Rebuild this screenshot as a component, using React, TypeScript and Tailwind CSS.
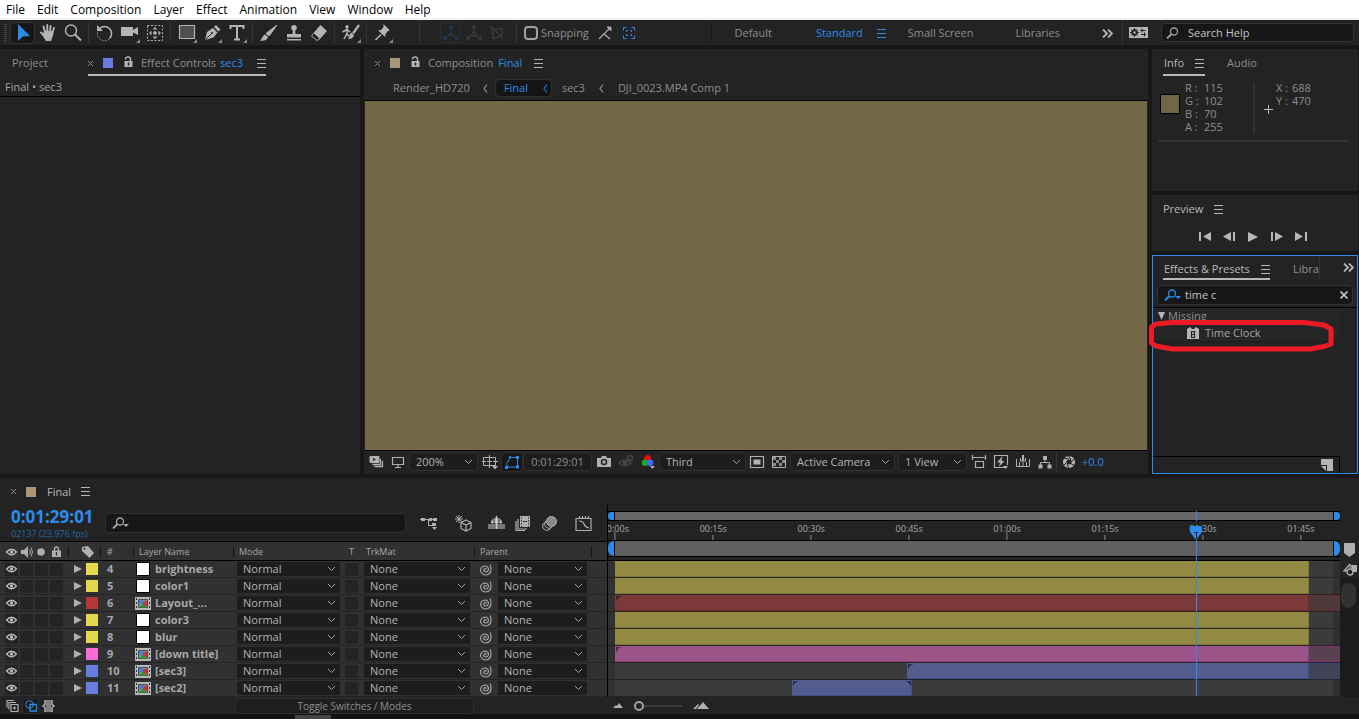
import type { ReactNode } from 'react';
import clsx from 'clsx';

const MENU = ['File', 'Edit', 'Composition', 'Layer', 'Effect', 'Animation', 'View', 'Window', 'Help'];

interface Layer {
  id: number;
  name: string;
  kind: 'solid' | 'comp';
  swatch: string;
  bar: string;
  ghost?: string;
  start: number;
  end: number;
  audio?: boolean;
}

const YELLOW = 'bg-[#928943] border-[#7d7436]';
const BLUE = 'bg-[#535c8e] border-[#404d88]';

const LAYERS: Layer[] = [
  { id: 4, name: 'brightness', kind: 'solid', swatch: 'bg-[#e4d84c]', bar: YELLOW, start: 0, end: 106.2 },
  { id: 5, name: 'color1', kind: 'solid', swatch: 'bg-[#e4d84c]', bar: YELLOW, start: 0, end: 106.2 },
  {
    id: 6,
    name: 'Layout_...',
    kind: 'comp',
    swatch: 'bg-[#b53838]',
    bar: 'bg-[#7b3939] border-[#6e2c2f]',
    ghost: 'bg-[#4f3839] border-[#642f33]',
    start: 0,
    end: 106.2,
  },
  { id: 7, name: 'color3', kind: 'solid', swatch: 'bg-[#e4d84c]', bar: YELLOW, start: 0, end: 106.2 },
  { id: 8, name: 'blur', kind: 'solid', swatch: 'bg-[#e4d84c]', bar: YELLOW, start: 0, end: 106.2 },
  {
    id: 9,
    name: '[down title]',
    kind: 'comp',
    swatch: 'bg-[#f76cd7]',
    bar: 'bg-[#9a5487] border-[#8a3f76]',
    ghost: 'bg-[#5a4152] border-[#80336b]',
    start: 0,
    end: 106.2,
  },
  {
    id: 10,
    name: '[sec3]',
    kind: 'comp',
    swatch: 'bg-[#677de0]',
    bar: BLUE,
    ghost: 'bg-[#414457] border-[#35437a]',
    start: 44.7,
    end: 106.2,
    audio: true,
  },
  { id: 11, name: '[sec2]', kind: 'comp', swatch: 'bg-[#677de0]', bar: BLUE, start: 27.1, end: 45.4, audio: true },
];

const TICKS = [
  { at: 0, label: '00:00s' },
  { at: 15, label: '00:15s' },
  { at: 30, label: '00:30s' },
  { at: 45, label: '00:45s' },
  { at: 60, label: '01:00s' },
  { at: 75, label: '01:15s' },
  { at: 90, label: '01:30s' },
  { at: 105, label: '01:45s' },
];

const PLAYHEAD = 89;

// seconds -> percentage of the track width
const span = (seconds: number) => seconds * 0.892;
const pos = (seconds: number) => `${1 + span(seconds)}%`;

interface IconProps {
  w?: number;
  h?: number;
  className?: string;
  children: ReactNode;
}

const Icon = ({ w = 20, h = 20, className, children }: IconProps) => (
  <svg
    width={w}
    height={h}
    viewBox={`0 0 ${w} ${h}`}
    fill="none"
    stroke="currentColor"
    className={clsx('shrink-0', className)}
    aria-hidden="true"
  >
    {children}
  </svg>
);

const Hamburger = ({ className }: { className?: string }) => (
  <Icon w={9} h={9} className={className}>
    <path d="M0 .5h9M0 4.500h9M0 8.500h9" />
  </Icon>
);

const Chevron = () => (
  <Icon w={9} h={6} className="pointer-events-none absolute right-1 top-1/2 -translate-y-1/2 text-[#a0a0a0]">
    <path d="M1 1l3.500 3.500L8 1" />
  </Icon>
);

const DoubleChevron = () => (
  <Icon w={11} h={9} className="text-[#b4b4b4]">
    <path d="M1 .5l4 4-4 4M6 .5l4 4-4 4" strokeWidth="1.800" />
  </Icon>
);

const Unlock = () => (
  <Icon w={9} h={11} className="text-[#b4b4b4]">
    <path d="M1.500 3.500V3q0-2 2.500-2t2.500 2v2" strokeWidth="1.400" />
    <path fill="currentColor" stroke="none" d="M.5 5h8v6h-8z" />
    <path d="M4.500 6.500v3" stroke="#232323" strokeWidth="1.500" />
  </Icon>
);

const CloseMark = () => (
  <Icon w={5} h={5} className="text-[#8a8a8a]">
    <path d="M0 0l5 5M5 0L0 5" />
  </Icon>
);

const Eye = () => (
  <Icon w={11} h={8} className="text-[#b8b8b8]">
    <path d="M.5 4Q5.500-1.500 10.500 4 5.500 9.500.5 4z" strokeWidth="1.400" />
    <circle cx="5.500" cy="4" r="1.700" fill="currentColor" stroke="none" />
  </Icon>
);

const Corner = () => <path d="M20 16v4h-4z" fill="#8a8a8a" stroke="none" />;

const Magnifier = ({ arrow }: { arrow?: boolean }) => (
  <Icon w={18} h={12}>
    <circle cx="8" cy="4.500" r="3.500" strokeWidth="1.300" />
    <path d="M5.500 7L1 11.500" strokeWidth="1.800" />
    {arrow && <path d="M11 7h6l-3 3z" fill="currentColor" stroke="none" />}
  </Icon>
);

const ToolDivider = () => <span className="mx-[3px] h-[21px] w-px shrink-0 bg-[#343434]" />;

interface ToolProps {
  label: string;
  active?: boolean;
  children: ReactNode;
}

const Tool = ({ label, active, children }: ToolProps) => (
  <button
    type="button"
    aria-label={label}
    className={clsx(
      'flex h-[22px] w-[25px] shrink-0 items-center justify-center',
      active ? 'rounded-sm border border-[#333333] bg-[#171717] text-[#2d8ceb]' : 'text-[#b4b4b4]',
    )}
  >
    <Icon>{children}</Icon>
  </button>
);

const Toolbar = () => (
  <div className="flex h-[25px] shrink-0 items-center bg-[#232323] text-[#8e8e8e]">
    <Icon w={10} h={20} className="text-[#444444]">
      <path d="M5.500 1v19" strokeWidth="3" strokeDasharray="1 1" />
    </Icon>
    <Tool label="Selection" active>
      <path d="M5 1v17l4.500-4.500 7.500-.5z" fill="currentColor" stroke="none" />
    </Tool>
    <Tool label="Hand">
      <path d="M7 9L5.500 3.500M9.300 9V2M12 9l.6-6M14.300 10l1.700-5M6.500 13L3 9.500" strokeWidth="1.900" strokeLinecap="round" />
      <path d="M6 8h9l.5 3-2.500 7H8l-3.500-5.500z" fill="currentColor" stroke="none" />
    </Tool>
    <Tool label="Zoom">
      <circle cx="8" cy="7.500" r="5.500" strokeWidth="1.400" />
      <path d="M12 11.500l6 6" strokeWidth="2" />
    </Tool>
    <ToolDivider />
    <Tool label="Rotate">
      <path d="M4.500 5.500a7 7 0 1 1 10 10" strokeWidth="1.500" />
      <path d="M14 16A7 7 0 0 1 3 8" strokeDasharray="1.500 1.500" />
      <path d="M2 2v6h6z" fill="currentColor" stroke="none" />
    </Tool>
    <Tool label="Camera">
      <path d="M1 4h12v3l5-3v8l-5-2.500V13H1z" fill="currentColor" stroke="none" />
      <Corner />
    </Tool>
    <Tool label="Pan Behind">
      <path d="M2.500 2.500h15v15h-15z" strokeDasharray="2 1.600" />
      <circle cx="10" cy="10" r="1.400" fill="currentColor" />
      <path
        d="M10 4l2.500 2.500h-5zM10 16l2.500-2.500h-5zM4 10l2.500-2.500v5zM16 10l-2.500-2.500v5z"
        fill="currentColor"
        stroke="none"
      />
    </Tool>
    <ToolDivider />
    <Tool label="Rectangle">
      <path d="M2.500 2.500h15v13h-15z" fill="#505050" strokeWidth="1.200" />
      <Corner />
    </Tool>
    <Tool label="Pen">
      <path d="M3 17l2-8 6-4 4.500 4.500-4 5zM12 4l2-2 4.500 4.500-2 2z" fill="currentColor" stroke="none" />
      <path d="M3.500 16.500l6-6" stroke="#232323" />
      <circle cx="10" cy="10" r="1" fill="#232323" stroke="none" />
      <Corner />
    </Tool>
    <Tool label="Type">
      <path d="M3.500 6V3h13v3M10 3v13M7 16.500h6" strokeWidth="2" />
      <Corner />
    </Tool>
    <ToolDivider />
    <Tool label="Brush">
      <path d="M18 2l-8 11-3-2.500z" fill="currentColor" />
      <path d="M6 11.500l3 2.500c-1 4-5 4-8 3.500 2-1 2.500-5 5-6z" fill="currentColor" stroke="none" />
    </Tool>
    <Tool label="Clone Stamp">
      <circle cx="10" cy="4.800" r="2.800" fill="currentColor" stroke="none" />
      <path d="M9 6h2l.5 5H17v3.500H3V11h5.500zM3 16h14v1.500H3z" fill="currentColor" stroke="none" />
    </Tool>
    <Tool label="Eraser">
      <path d="M11.500 2L18 8l-7 8-6.500-6z" fill="currentColor" stroke="none" />
      <path d="M4.500 10.500L2.500 13l5.500 4.500 3-2" />
    </Tool>
    <ToolDivider />
    <Tool label="Roto Brush">
      <circle cx="6" cy="3.800" r="1.700" fill="currentColor" stroke="none" />
      <path d="M6 5v6M1.500 9L6 6.500 9 9M6 10.500L3 16M6 10.500l2 3" strokeWidth="1.500" />
      <path d="M18 2l-6 8.500" strokeWidth="2.200" />
      <path d="M10 9.500l3 2.500c-1 4-4 4-6 4 2-2 1-4 3-6.500z" fill="currentColor" stroke="none" />
      <Corner />
    </Tool>
    <ToolDivider />
    <Tool label="Puppet Pin">
      <path d="M10.500 1L17 7.500l-2 .5-2.500 3-.2 3L5 7.500l3-.5L10.500 4z" fill="currentColor" stroke="none" />
      <path d="M8 11.500L2.500 17" strokeWidth="1.600" />
      <Corner />
    </Tool>
    <span className="ml-6 mr-5 h-[25px] w-px bg-[#343434]" />
    <span className="flex h-[21px] w-[21px] items-center justify-center rounded-sm border border-[#2b2f33] text-[#234466]">
      <Icon w={16} h={16}>
        <path d="M8 9V1M8 9l-7 5M8 9l7 5M6 3l2-2 2 2M1 11v3h3M15 11v3h-3" />
      </Icon>
    </span>
    <Icon w={16} h={16} className="ml-[5px] text-[#454545]">
      <circle cx="8" cy="9" r="2" />
      <path d="M8 7V1M6 10l-5 4M10 10l5 4M6 3l2-2 2 2M1 11v3h3M15 11v3h-3" />
    </Icon>
    <Icon w={16} h={16} className="ml-[7px] text-[#454545]">
      <path d="M2 1v3h3M2 1l12 13M4 5v9l9-4V3L6 5" />
    </Icon>
    <span className="ml-[11px] mr-[7px] h-[21px] w-px bg-[#343434]" />
    <label className="flex items-center gap-[3px] text-[11px]">
      <input type="checkbox" className="size-[14px] appearance-none rounded-sm border-2 border-[#a0a0a0]" />
      Snapping
    </label>
    <Icon w={14} h={14} className="ml-[9px] text-[#a8a8a8]">
      <path d="M1 13l5-5 6 5M6 8l5-5" strokeWidth="1.300" />
      <path d="M9 1h4v4z" fill="currentColor" />
    </Icon>
    <Icon w={14} h={14} className="ml-[10px] text-[#2d8ceb]">
      <path d="M1.500 4.500v-3h3M9.500 1.500h3v3M12.500 9.500v3h-3M4.500 12.500h-3v-3M4.500 6V4.500H6M8 4.500h1.500V6M9.500 8v1.500H8M6 9.500H4.500V8" />
    </Icon>

    <nav className="ml-auto flex items-center pt-px text-[11px]">
      <span className="h-[21px] w-px bg-[#1a1a1a]" />
      <button type="button" className="ml-[22px]">Default</button>
      <button type="button" className="ml-11 text-[#2d8ceb]">Standard</button>
      <Hamburger className="ml-[14px] text-[#2d8ceb]" />
      <button type="button" className="ml-[22px]">Small Screen</button>
      <button type="button" className="ml-[42px] mr-[42px]">Libraries</button>
      <DoubleChevron />
    </nav>
    <span className="ml-[9px] h-[25px] w-px bg-[#343434]" />
    <Icon w={19} h={11} className="ml-[6px]">
      <path d="M0 0h19v11H0z" fill="#b4b4b4" stroke="none" />
      <circle cx="5.500" cy="5.500" r="2.500" stroke="#232323" strokeWidth="1.600" />
      <path d="M5.500 1v9M1 5.500h9M2.500 2.500l6 6M8.500 2.500l-6 6" stroke="#232323" />
      <circle cx="5.500" cy="5.500" r="1.200" fill="#b4b4b4" stroke="none" />
      <path d="M11.500 3.500h5M13 1.500v4M12 7.500h5M15.500 5.500v4" stroke="#232323" />
    </Icon>
    <div className="ml-[13px] mr-[5px] flex h-[19px] w-[193px] items-center rounded-sm border border-[#333333] bg-[#171717] pl-1 text-[#a0a0a0]">
      <Magnifier />
      <input
        type="text"
        aria-label="Search Help"
        placeholder="Search Help"
        className="ml-1 min-w-0 flex-1 bg-transparent text-[11px] text-[#c4c4c4] outline-none placeholder:text-[#c4c4c4]"
      />
    </div>
  </div>
);

const EffectControls = () => (
  <section className="w-[360px] shrink-0 bg-[#232323] text-[#8e8e8e]">
    <div className="flex h-[27px] items-end pl-3">
      <button type="button" className="w-[76px] pb-[5px] text-left leading-4">Project</button>
      <div className="flex h-[26px] items-center border-b-2 border-[#b8b8b8] pt-0.5 leading-4">
        <CloseMark />
        <span className="ml-[10px] size-[10px] bg-[#677de0]" />
        <span className="ml-[11px] mr-[8px] pb-1">
          <Unlock />
        </span>
        Effect Controls <span className="ml-1 text-[#2d8ceb]">sec3</span>
        <Hamburger className="ml-[14px] text-[#b4b4b4]" />
      </div>
    </div>
    <div className="h-[21px] border-b border-black pl-[5px] leading-[22px] text-[#a4a4a4]">Final • sec3</div>
  </section>
);

const Crumb = ({ className }: { className?: string }) => (
  <Icon w={5} h={9} className={className}>
    <path d="M4 .5l-3 4 3 4" strokeWidth="1.200" />
  </Icon>
);

interface DropdownProps {
  label: string;
  value: string;
  className?: string;
}

const Dropdown = ({ label, value, className }: DropdownProps) => (
  <span className={clsx('relative inline-block shrink-0 bg-[#1d1d1d]', className)}>
    <select aria-label={label} className="block h-full w-full appearance-none bg-transparent pl-[6px] text-[11px] leading-3 text-[#b4b4b4] outline-none">
      <option>{value}</option>
    </select>
    <Chevron />
  </span>
);

const Cell = ({ children, active }: { children: ReactNode; active?: boolean }) => (
  <span
    className={clsx(
      'flex h-5 w-[22px] shrink-0 items-center justify-center',
      active ? 'rounded-sm border border-[#2e2e2e] bg-[#171717] text-[#2d8ceb]' : 'text-[#b0b0b0]',
    )}
  >
    <Icon w={16} h={16}>{children}</Icon>
  </span>
);

const Viewer = () => (
  <section className="flex min-w-0 flex-1 flex-col bg-[#232323] text-[#8e8e8e]">
    <div className="flex h-7 shrink-0 items-center pl-[11px]">
      <CloseMark />
      <span className="ml-[10px] size-[10px] bg-[#a99778]" />
      <span className="ml-[11px] mr-[8px] pb-1">
        <Unlock />
      </span>
      Composition <span className="ml-[5px] text-[#2d8ceb]">Final</span>
      <Hamburger className="ml-3 text-[#b4b4b4]" />
    </div>
    <div className="flex h-[23px] shrink-0 items-center pb-px pl-[29px]">
      <button type="button">Render_HD720</button>
      <Crumb className="ml-[13px] mr-[7px]" />
      <button type="button" className="flex h-[18px] w-[57px] items-center justify-between rounded-sm border border-[#303030] bg-[#151515] pl-2 pr-[3px] text-[#2d8ceb]">
        Final
        <Crumb className="text-[#2474c2]" />
      </button>
      <button type="button" className="ml-[10px]">sec3</button>
      <Crumb className="mx-[14px]" />
      <button type="button">DJI_0023.MP4 Comp 1</button>
    </div>
    <div className="ml-px mr-px min-h-0 flex-1 border-y border-black bg-[#736746]" />
    <div className="flex h-[23px] shrink-0 items-center pb-[2px] pl-px">
      <Cell>
        <path d="M2 2.500h9v6H2z" fill="currentColor" />
        <path d="M5 4l3 1.500L5 7z" fill="#232323" stroke="none" />
        <path d="M12.500 5v5.500H4.500M14.500 7v5.500H6.500" strokeWidth="1.300" />
      </Cell>
      <Cell>
        <path d="M2.500 3.500h11v7h-11zM8 10v3M5 13.500h6" strokeWidth="1.200" />
      </Cell>
      <Dropdown label="Magnification" value="200%" className="mr-px h-[19px] w-[69px] rounded-sm border border-[#303030]" />
      <Cell>
        <path d="M1.500 3.500h12v8h-12zM7.500 1v13M0 7.500h4M11 7.500h5M5 7.500h5" />
        <path d="M10 12h6l-3 3.500z" fill="currentColor" stroke="none" />
      </Cell>
      <Cell active>
        <path d="M3.500 13L2.500 9.500l4-6H13.500v9.500z" />
        <path d="M1 12h3v3H1zM12 2h3v3h-3zM12 11.500h3v3h-3zM5 2h2v2H5z" fill="currentColor" stroke="none" />
      </Cell>
      <button type="button" className="mr-px h-[19px] w-[69px] rounded-sm border border-[#303030] bg-[#1d1d1d] text-[11px]">0:01:29:01</button>
      <Cell>
        <path d="M1 4h4l1-2h4l1 2h4v9H1z" fill="currentColor" stroke="none" />
        <circle cx="8" cy="8" r="2.500" stroke="#232323" strokeWidth="1.500" />
      </Cell>
      <span className="flex h-5 w-[22px] items-center justify-center text-[#454545]">
        <Icon w={16} h={16}>
          <path d="M1 9q6-6 12 0-6 6-12 0z" strokeWidth="1.500" />
          <circle cx="7" cy="9" r="2" fill="currentColor" />
          <circle cx="12" cy="4" r="2.500" strokeWidth="1.500" />
        </Icon>
      </span>
      <Cell>
        <circle cx="7.500" cy="4.500" r="3.500" fill="#f00808" stroke="none" />
        <circle cx="5" cy="8.700" r="3.300" fill="#10b010" stroke="none" />
        <circle cx="10" cy="8.700" r="3.300" fill="#4a68ff" stroke="none" />
        <path d="M10 12h5l-2.500 3z" fill="currentColor" stroke="none" />
      </Cell>
      <Dropdown label="Resolution" value="Third" className="h-[19px] w-[87px] rounded-sm border border-[#303030]" />
      <Cell>
        <path d="M1.500 2.500h13v11h-13z" strokeWidth="1.200" />
        <path d="M4.500 5.500h7v5h-7z" fill="currentColor" stroke="none" />
      </Cell>
      <Cell>
        <path d="M1.500 2.500h13v11h-13z" />
        <path
          d="M2 3h3v3H2zM8 3h3v3H8zM5 6h3v3H5zM11 6h3v3h-3zM2 9h3v3H2zM8 9h3v3H8z"
          fill="#8a8a8a"
          stroke="none"
        />
      </Cell>
      <Dropdown label="3D view" value="Active Camera" className="mr-[3px] h-[19px] w-[105px] rounded-sm border border-[#303030]" />
      <Dropdown label="View layout" value="1 View" className="mr-px h-[19px] w-[69px] rounded-sm border border-[#303030]" />
      <Cell>
        <path d="M1 3.500h14M1.500 1v5M14.500 1v5M4.500 7.500h8v6h-8z" strokeWidth="1.200" />
      </Cell>
      <Cell>
        <path d="M12 13.500H1.500v-12h13V11" strokeWidth="1.200" />
        <path d="M9.500 2L4 8.500h3L6 13l5.500-6h-3zM10 12h5l-2.500 3z" fill="currentColor" stroke="none" />
      </Cell>
      <Cell>
        <path d="M1.500 5v7.500h13V5M4.500 8v4M8 8v4M11.500 8v4M5.500 4v3h5V4" />
        <path d="M7 1h2v6H7z" fill="currentColor" stroke="none" />
      </Cell>
      <Cell>
        <path d="M6 2h4v4H6zM1.500 10.500h4v4h-4zM10.500 10.500h4v4h-4z" fill="currentColor" stroke="none" />
        <path d="M8 6v2.500M3.500 11V8.500h9V11" />
      </Cell>
      <span className="mr-px h-5 w-px bg-[#343434]" />
      <Cell>
        <circle cx="8" cy="8" r="4.300" strokeWidth="3.600" />
        <path d="M7 1l3 5M14 5l-5 3M14 12l-5-3M8 15l-2-5M2 12l4-4M2 4l6 1" stroke="#232323" />
      </Cell>
      <span className="ml-[2px] text-[#2d8ceb]">+0.0</span>
    </div>
  </section>
);

interface InfoRowProps {
  name: string;
  value: number;
  narrow?: boolean;
}

const InfoRow = ({ name, value, narrow }: InfoRowProps) => (
  <div className="flex h-[13px]">
    <dt className={narrow ? 'w-4' : 'w-[19px]'}>{name} :</dt>
    <dd>{value}</dd>
  </div>
);

const InfoPanel = () => (
  <section className="h-[142px] shrink-0 bg-[#232323] text-[#8e8e8e]">
    <div className="flex h-[27px] items-end pl-[11px]">
      <div className="flex h-[26px] w-[42px] items-center justify-between border-b-2 border-[#b8b8b8] px-px pt-0.5 leading-4 text-[#b8b8b8]">
        Info
        <Hamburger />
      </div>
      <button type="button" className="ml-[22px] pb-[5px] leading-4">Audio</button>
    </div>
    <div className="ml-[6px] mr-[9px] mt-2 flex h-[58px] border-b-2 border-[#323232] pl-[2px]">
      <span className="mt-[10px] size-5 border border-black bg-[#736646]" />
      <dl className="-mt-px ml-[5px] leading-[9px]">
        <InfoRow name="R" value={115} />
        <InfoRow name="G" value={102} />
        <InfoRow name="B" value={70} />
        <InfoRow name="A" value={255} />
      </dl>
      <span className="ml-[30px] h-[50px] w-0.5 bg-[#323232]" />
      <Icon w={9} h={9} className="ml-[9px] mt-[21px] text-[#b8b8b8]">
        <path d="M4.500 0v9M0 4.500h9" />
      </Icon>
      <dl className="-mt-px ml-[3px] leading-[9px]">
        <InfoRow name="X" value={688} narrow />
        <InfoRow name="Y" value={470} narrow />
      </dl>
    </div>
  </section>
);

const PreviewPanel = () => (
  <section className="h-14 shrink-0 bg-[#232323]">
    <div className="flex h-7 items-center gap-[11px] pl-[11px] text-[#b8b8b8]">
      Preview
      <Hamburger />
    </div>
    <div className="flex h-7 items-center justify-center gap-[12px] pr-1 text-[#b8b8b8]">
      <button type="button" aria-label="First frame">
        <Icon w={12} h={10}>
          <path d="M0 0h2v9H0zM12 0v9L4 4.500z" fill="currentColor" stroke="none" />
        </Icon>
      </button>
      <button type="button" aria-label="Previous frame">
        <Icon w={12} h={10}>
          <path d="M8 0v9L0 4.500zM10 0h2v9h-2z" fill="currentColor" stroke="none" />
        </Icon>
      </button>
      <button type="button" aria-label="Play">
        <Icon w={12} h={10}>
          <path d="M1 0v10l10-5z" fill="currentColor" stroke="none" />
        </Icon>
      </button>
      <button type="button" aria-label="Next frame">
        <Icon w={12} h={10}>
          <path d="M0 0h2v9H0zM4 0v9l8-4.500z" fill="currentColor" stroke="none" />
        </Icon>
      </button>
      <button type="button" aria-label="Last frame">
        <Icon w={12} h={10}>
          <path d="M0 0v9l8-4.500zM10 0h2v9h-2z" fill="currentColor" stroke="none" />
        </Icon>
      </button>
    </div>
  </section>
);

const EffectsPanel = () => (
  <section className="relative flex min-h-0 flex-1 flex-col border border-[#2d8ceb] bg-[#232323]">
    <div className="flex h-[24px] shrink-0 items-end pl-[10px] text-[#8e8e8e]">
      <div className="flex h-[24px] w-[107px] items-center justify-between border-b-2 border-[#b8b8b8] pl-px pt-1 text-[#b8b8b8]">
        Effects &amp; Presets
        <Hamburger />
      </div>
      <button type="button" className="ml-[23px] mr-auto h-[23px] border-r border-[#343434]">Libra</button>
      <span className="mb-2 mr-[3px]">
        <DoubleChevron />
      </span>
    </div>
    <div className="ml-1 mr-1 mt-[5px] flex h-[20px] shrink-0 items-center rounded-sm border border-[#333333] bg-[#171717] pl-[6px] pr-1 text-[#2d8ceb]">
      <Magnifier arrow />
      <input
        type="text"
        aria-label="Search effects"
        defaultValue="time c"
        className="ml-[3px] min-w-0 flex-1 bg-transparent text-[#c4c4c4] outline-none"
      />
      <button type="button" aria-label="Clear search" className="text-[#c4c4c4]">
        <Icon w={8} h={8}>
          <path d="M.5.5l7 7M7.500.5l-7 7" strokeWidth="1.600" />
        </Icon>
      </button>
    </div>
    <div className="mt-[2px] min-h-0 flex-1 border-t border-black pr-[17px] text-[#8e8e8e]">
      <div className="flex h-[17px] items-center gap-[3px] border-b border-[#1e1e1e] bg-[#262626] pl-[5px]">
        <Icon w={7} h={8} className="text-[#b4b4b4]">
          <path d="M0 0h7L3.500 8z" fill="currentColor" stroke="none" />
        </Icon>
        Missing
      </div>
      <div className="flex h-[17px] items-center gap-[6px] border-b border-[#1e1e1e] bg-[#262626] pl-[34px] text-[#a4a4a4]">
        <Icon w={12} h={12}>
          <path d="M0 2l3-2 2 2h2l2-2 3 2v10H0z" fill="#b4b4b4" stroke="none" />
          <path d="M4.500 4.500h3v6h-3zM4.500 7.500h3" stroke="#232323" strokeWidth="1.200" />
        </Icon>
        Time Clock
      </div>
    </div>
    <div className="mr-[17px] flex h-[17px] shrink-0 items-center justify-end border-r border-t border-black pr-[6px]">
      <Icon w={12} h={12}>
        <path d="M0 0h12v12H6V6H0z" fill="#b4b4b4" stroke="none" />
        <path d="M0 7h5v5z" fill="#b4b4b4" stroke="none" />
      </Icon>
    </div>
    {/* hand-drawn marker around the found effect */}
    <svg
      width="186"
      height="33"
      viewBox="0 0 186 33"
      fill="none"
      aria-hidden="true"
      className="pointer-events-none absolute -left-[5px] top-[63px]"
    >
      <path
        d="M24 3.500H156l20 2.500 7 4v15l-7 2.500-14 2.500H24L8 27l-4.500-3V8L8 5z"
        stroke="#ed1c24"
        strokeWidth="5"
        strokeLinejoin="round"
      />
    </svg>
  </section>
);

const CompIcon = () => (
  <Icon w={16} h={13}>
    <path d="M0 0h16v13H0z" fill="#b8b8b8" stroke="none" />
    <path d="M3.500 2.500h9v8h-9z" stroke="#4a4a4a" fill="#8a8a8a" />
    <path d="M1.500 1v12M14.500 1v12" stroke="#303030" strokeDasharray="2 2" />
    <path d="M8 4h4v5H8z" fill="#d83030" stroke="none" />
    <circle cx="6" cy="5" r="2.200" fill="#3088e8" stroke="none" />
    <path d="M4.500 10.500l3.500-4 3 4z" fill="#18a028" stroke="none" />
  </Icon>
);

const Pickwhip = () => (
  <Icon w={13} h={13} className="text-[#a4a4a4]">
    <path
      d="M7.500 6.500Q6 5 5 6.300 4 8.500 6.300 9 9.500 9 9.500 6 9 3 6 3 2 3.500 1.500 7 2 11.500 6.500 12 12 11.500 12 6q0-3-1-4.500"
      strokeWidth="1.200"
    />
  </Icon>
);

const Box = ({ on = true }: { on?: boolean }) => (
  <span className={clsx('mr-[2px] h-[13px] w-[13px]', on && 'bg-[#242424]')} />
);

const LayerRow = ({ layer }: { layer: Layer }) => (
  <li className="flex h-[17px] items-center border-b border-[#242424] bg-[#313131] pl-[5px]">
    <span className="mr-[2px] flex h-[13px] w-[13px] items-center justify-center bg-[#242424]">
      <Eye />
    </span>
    <Box on={layer.audio} />
    <Box />
    <Box />
    <Icon w={9} h={8} className="ml-2 mr-1 text-[#b0b0b0]">
      <path d="M1 0v8l8-4z" fill="currentColor" stroke="none" />
    </Icon>
    <span className={clsx('size-3', layer.swatch)} />
    <span className="ml-[9px] w-[28px] font-bold">{layer.id}</span>
    <span className="flex w-[20px]">
      {layer.kind === 'solid' ? (
        <span className="ml-px size-[14px] border border-black bg-white" />
      ) : (
        <CompIcon />
      )}
    </span>
    <span className="w-[82px] font-bold">{layer.name}</span>
    <Dropdown label={`${layer.name} mode`} value="Normal" className="h-[14px] w-[103px]" />
    <span className="ml-[5px] h-[13px] w-[13px] bg-[#242424]" />
    <Dropdown label={`${layer.name} track matte`} value="None" className="ml-[6px] h-[14px] w-[106px]" />
    <span className="ml-[9px] mr-[6px]">
      <Pickwhip />
    </span>
    <Dropdown label={`${layer.name} parent`} value="None" className="h-[14px] w-[89px]" />
  </li>
);

const HeadCell = ({ className, children }: { className: string; children: ReactNode }) => (
  <span className={clsx('flex h-3 shrink-0 items-center border-r border-[#151515]', className)}>{children}</span>
);

const LayerHeader = () => (
  <div className="flex h-5 items-center border-y border-black bg-[#313131] pt-px text-[9px] text-[#a8a8a8]">
    <HeadCell className="w-[69px] gap-[4px] pl-[6px] text-[#b0b0b0]">
      <Eye />
      <Icon w={12} h={12}>
        <path d="M0 4h3l4-4v12L3 8H0z" fill="currentColor" stroke="none" />
        <path d="M8.500 3.500q2 2.500 0 5M10 1.500q3 4.500 0 9" />
      </Icon>
      <Icon w={8} h={8}>
        <circle cx="4" cy="4" r="3.800" fill="currentColor" stroke="none" />
      </Icon>
      <Icon w={9} h={11} className="ml-[3px]">
        <path d="M2.500 5V3q0-2 2-2t2 2v2" strokeWidth="1.300" />
        <path d="M0 4.500h9V11H0z" fill="currentColor" stroke="none" />
        <path d="M4.500 6v3.500" stroke="#313131" strokeWidth="1.400" />
      </Icon>
    </HeadCell>
    <HeadCell className="w-8 pl-[13px]">
      <Icon w={12} h={12}>
        <path d="M0 1l6-1 6 7-4.500 5L0 5z" fill="#b0b0b0" stroke="none" />
        <circle cx="2.500" cy="2.800" r="1" fill="#313131" stroke="none" />
      </Icon>
    </HeadCell>
    <HeadCell className="w-[33px] pl-[6px]">#</HeadCell>
    <HeadCell className="w-[100px] pl-[5px]">Layer Name</HeadCell>
    <HeadCell className="w-[241px] pl-[5px]">
      <span className="w-[110px]">Mode</span>
      <span className="w-[17px]">T</span>
      TrkMat
    </HeadCell>
    <HeadCell className="w-[117px] pl-[5px]">Parent</HeadCell>
  </div>
);

const Track = ({ layer }: { layer: Layer }) => (
  <div className="flex h-[17px] border-b border-[#242424] bg-[#313131]">
    <span className="shrink-0" style={{ width: pos(0) }} />
    <div className="flex min-w-0 flex-1 bg-gradient-to-r from-[#3b3b3b] from-99% to-[#303030] to-99%">
      <span className="shrink-0" style={{ width: `${span(layer.start) / 0.99}%` }} />
      <span
        className={clsx('relative shrink-0 overflow-hidden border-b border-r', layer.bar)}
        style={{ width: `${span(layer.end - layer.start) / 0.99}%` }}
      >
        {layer.kind === 'comp' && (
          <Icon w={6} h={6} className="absolute left-px top-px text-black/50">
            <path d="M0 0h6Q1 1 0 6z" fill="currentColor" stroke="none" />
          </Icon>
        )}
        {layer.kind === 'comp' && !layer.ghost && (
          <Icon w={6} h={6} className="absolute right-0 top-px text-black/50">
            <path d="M6 0H0q5 1 6 6z" fill="currentColor" stroke="none" />
          </Icon>
        )}
      </span>
      {layer.ghost && <span className={clsx('flex-1 border-y', layer.ghost)} />}
    </div>
  </div>
);

// Blue-handled range bar, used for the navigator and for the work area
const RangeBar = ({ className, fill }: { className: string; fill: string }) => (
  <div className={clsx('flex border-y border-black', className)}>
    <span className="w-[6px] rounded-l-md bg-[#2d8ceb]" />
    <span className={clsx('flex-1 border-x border-black', fill)} />
    <span className="w-[6px] rounded-r-md bg-[#2d8ceb]" />
  </div>
);

const Timeline = () => (
  <section className="shrink-0 bg-[#232323]">
    <div className="flex h-[27px] items-center pl-[11px] text-[#b8b8b8]">
      <CloseMark />
      <span className="ml-[10px] mr-[11px] size-[10px] bg-[#a99778]" />
      Final
      <Hamburger className="ml-[10px]" />
    </div>

    <div className="flex">
      <div className="w-[608px] shrink-0 border-r border-black">
        <div className="flex h-9 items-center">
          <div className="w-[105px] pl-[11px] text-[#2d8ceb]">
            <div className="text-[17px] font-bold leading-[22px]">0:01:29:01</div>
            <div className="text-[9px] leading-3 text-[#1f66ad]">02137 (23.976 fps)</div>
          </div>
          <div className="flex h-5 w-[301px] items-center rounded-sm border border-[#303030] bg-[#171717] pl-1.5 text-[#a8a8a8]">
            <Magnifier arrow />
            <input type="text" aria-label="Search layers" className="min-w-0 flex-1 bg-transparent outline-none" />
          </div>
          <div className="ml-[14px] flex flex-1 items-center text-[#b0b0b0]">
            <Icon w={18} h={14} className="mr-4">
              <path d="M0 3.500h14M8.500 3.500v6h5" />
              <path d="M1 2h4v3H1zM9 2h3v3H9zM13 2h4v3h-4zM12 7h4v3h-4zM12 11h5l-2.500 3z" fill="currentColor" stroke="none" />
            </Icon>
            <Icon w={18} h={18} className="mr-4">
              <path d="M5 1v8M1 5h8M2 2l6 6M8 2L2 8" />
              <path d="M12 6l5 2.500v6L12 17l-5-2.500v-6zM7 8.500l5 2.500 5-2.500M12 11v6" strokeWidth="1.200" />
            </Icon>
            <Icon w={17} h={14} className="mr-[10px]">
              <path d="M0 8h17v5H0z" fill="#777777" stroke="none" />
              <path d="M3 7q0-5 5.500-5T14 7z" fill="currentColor" stroke="none" />
              <path d="M8.500 0v13M3 6.500h11" stroke="#d0d0d0" strokeWidth="1.400" />
              <path d="M6 3v4M11 3v4" stroke="#303030" />
            </Icon>
            <Icon w={15} h={15} className="mr-3">
              <path d="M5 0h10v11H5z" fill="currentColor" stroke="none" />
              <path d="M6.500 1v10M13.500 1v10" stroke="#303030" strokeDasharray="1.500 1.500" />
              <path d="M8 5.500h4" stroke="#303030" />
              <path d="M3 3v10h9M1 5v9.500h9" strokeWidth="1.200" />
            </Icon>
            <Icon w={15} h={15} className="mr-[18px]">
              <circle cx="5" cy="10" r="4.300" />
              <circle cx="7" cy="8" r="4.300" fill="#232323" />
              <circle cx="9.500" cy="5.500" r="5" fill="#888888" />
            </Icon>
            <Icon w={17} h={15}>
              <path d="M1 2.500h15v12H1zM4.500 0v3M7.500 0v3M10.500 0v3M13.500 0v3" strokeWidth="1.200" />
              <path d="M4 5q4 0 5 3t5 4" strokeWidth="1.200" />
            </Icon>
          </div>
        </div>
        <LayerHeader />
        <ul className="text-[#a8a8a8]">
          {LAYERS.map((layer) => (
            <LayerRow key={layer.id} layer={layer} />
          ))}
        </ul>
      </div>

      <div className="relative min-w-0 flex-1 pt-[6px]">
        <RangeBar className="h-[10px]" fill="bg-[#666666]" />
        <div className="relative h-[19px] overflow-hidden text-[9px] leading-[13px] text-[#a8a8a8]">
          {TICKS.map(({ at, label }) => (
            <span
              key={at}
              className="absolute top-0 flex h-full -translate-x-1/2 flex-col items-center justify-between pt-px"
              style={{ left: pos(at) }}
            >
              {label}
              <i className={clsx('w-px shrink-0 bg-[#8a8a8a]', at % 60 ? 'h-[5px]' : '-mt-1 h-2')} />
            </span>
          ))}
        </div>
        <RangeBar className="h-[17px]" fill="bg-[#5f5f5f]" />
        <div className="h-[4px] border-b border-black" />
        {LAYERS.map((layer) => (
          <Track key={layer.id} layer={layer} />
        ))}
        <div className="absolute bottom-0 top-[6px] w-3 -translate-x-1/2" style={{ left: pos(PLAYHEAD) }}>
          <span className="mx-auto block h-[10px] w-px bg-[#2d8ceb]" />
          <Icon w={12} h={14} className="mt-[5px] block text-[#2d8ceb]">
            <path d="M0 0h12v6l-6 8-6-8z" fill="currentColor" stroke="none" />
            <path d="M4 6.500h4M6.500 6v7" stroke="#232323" />
          </Icon>
          <span className="mx-auto block h-[156px] w-px bg-[#2d8ceb]" />
        </div>
      </div>

      <div className="flex w-[19px] shrink-0 flex-col items-center pt-[38px] text-[#b0b0b0]">
        <Icon w={11} h={14}>
          <path d="M0 0h11v10l-5.500 4L0 10z" fill="currentColor" stroke="none" />
        </Icon>
        <Icon w={14} h={13} className="mt-[6px]">
          <path d="M7 1L1 8h4M7 1v4" strokeWidth="1.300" />
          <path d="M8 2h6v7H9z" fill="currentColor" stroke="none" />
          <circle cx="7" cy="9" r="3" fill="#232323" strokeWidth="1.300" />
        </Icon>
        <div className="mt-0.5 w-full flex-1 bg-[#1b1b1b] pt-[5px]">
          <div className="ml-px h-[25px] w-[15px] rounded-full bg-[#313131]" />
        </div>
      </div>
    </div>

    <div className="flex h-[17px] items-center text-[#b0b0b0]">
      <div className="flex w-[235px] items-center gap-[3px] pl-[6px]">
        <Icon w={13} h={13}>
          <path d="M1 8.500v-7h7M3 10.500v-7h7M5 5.500h7v7H5zM7 9h3M8.500 7.500v3" strokeWidth="1.200" />
        </Icon>
        <span className="flex h-[16px] w-[17px] items-center justify-center border border-[#303030] bg-[#1b1b1b] text-[#2d8ceb]">
          <Icon w={12} h={12}>
            <circle cx="4.500" cy="4.500" r="3.800" />
            <path d="M5 4.500h6.500V11H5z" strokeWidth="1.300" />
          </Icon>
        </span>
        <Icon w={13} h={12}>
          <path d="M4 0h5v12H4z" fill="#808080" stroke="none" />
          <path d="M4 .5h-1v4l-2 1.500 2 1.500v4h1M9 .5h1v4l2 1.500-2 1.500v4H9" strokeWidth="1.500" />
        </Icon>
      </div>
      <button type="button" className="h-4 w-[239px] rounded-sm border border-[#303030] bg-[#1e1e1e] text-[10px] leading-[14px] text-[#8e8e8e]">
        Toggle Switches / Modes
      </button>
      <Icon w={10} h={5} className="ml-[139px]">
        <path d="M0 5l3-3 1 1 2-3 4 5z" fill="currentColor" stroke="none" />
      </Icon>
      <input
        type="range"
        aria-label="Timeline zoom"
        defaultValue={0}
        className="mx-[11px] h-[11px] w-[48px] appearance-none bg-transparent [&::-webkit-slider-runnable-track]:h-0.5 [&::-webkit-slider-runnable-track]:bg-[#3c3c3c] [&::-webkit-slider-thumb]:-mt-1 [&::-webkit-slider-thumb]:size-[10px] [&::-webkit-slider-thumb]:appearance-none [&::-webkit-slider-thumb]:rounded-full [&::-webkit-slider-thumb]:border-2 [&::-webkit-slider-thumb]:border-[#a0a0a0] [&::-webkit-slider-thumb]:bg-[#232323]"
      />
      <Icon w={16} h={7}>
        <path d="M0 7l5-5 1 1-3 4zM4 7l6-7 6 7z" fill="currentColor" stroke="none" />
      </Icon>
    </div>
  </section>
);

const App = () => (
  <main className="flex h-screen min-h-[600px] flex-col overflow-hidden bg-[#171717] font-['Open_Sans',sans-serif] text-[11px] leading-4">
    <nav className="flex h-5 shrink-0 items-center gap-3 border-b-2 border-[#f0f0f0] bg-white pl-1.5 pt-0.5 text-[12px] text-black">
      {MENU.map((item) => (
        <button key={item} type="button">
          {item}
        </button>
      ))}
    </nav>
    <Toolbar />
    <div className="my-1 flex min-h-0 flex-1 gap-1 pr-px">
      <EffectControls />
      <Viewer />
      <aside className="flex w-[206px] shrink-0 flex-col gap-1">
        <InfoPanel />
        <PreviewPanel />
        <EffectsPanel />
      </aside>
    </div>
    <Timeline />
    <div className="h-[5px] shrink-0 bg-[#131313] pl-[295px]">
      <div className="mt-px h-1 w-9 bg-[#444444]" />
    </div>
  </main>
);

export default App;
